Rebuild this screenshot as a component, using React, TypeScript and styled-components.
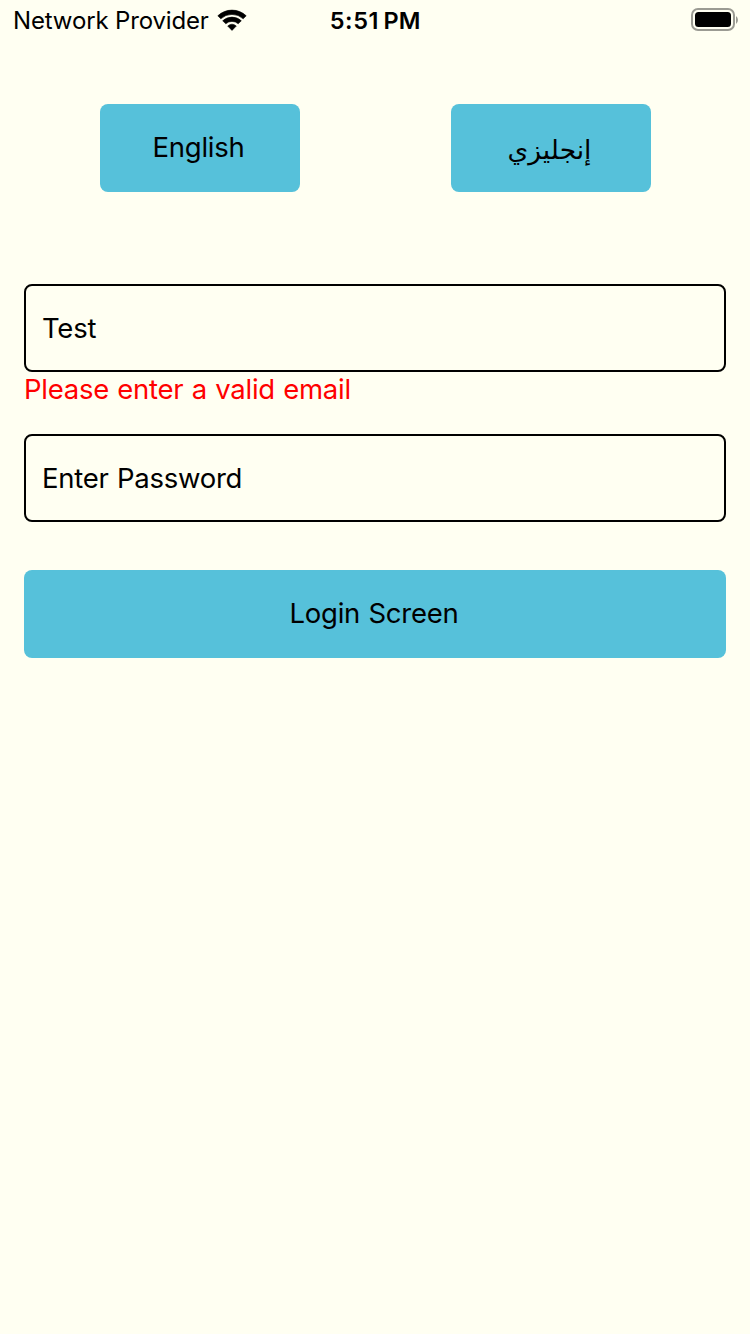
import React from "react";
import styled, { createGlobalStyle } from "styled-components";

const Global = createGlobalStyle`
  * { box-sizing: border-box; }
  body { margin: 0; background: #fffff2; }
`;
const Screen = styled.main`
  width: 750px; height: 1334px; background: #fffff2; color: #000;
  font-family: Inter, "DejaVu Sans", sans-serif; font-size: 27.5px; font-weight: 370;
  letter-spacing: -0.25px; word-spacing: 0.8px;
  display: flex; flex-direction: column; overflow: hidden;
`;
const StatusBar = styled.header`
  height: 40px; padding: 0 11px 0 13px; display: grid;
  grid-template-columns: 1fr auto 1fr; grid-template-rows: 40px; align-items: center;
`;
const Carrier = styled.div`
  display: flex; align-items: center; gap: 8px; font-size: 24px; letter-spacing: -0.15px; word-spacing: 0; white-space: nowrap;
`;
const CarrierName = styled.span`padding-top: 2px; line-height: 38px;`;
const Clock = styled.time`
  display: flex; gap: 5px; padding: 2px 2px 0 0; font-size: 23.5px; font-weight: 580; line-height: 38px; letter-spacing: 0;
`;
const Digits = styled.span`letter-spacing: 0.6px; margin-right: -0.6px;`;
const Battery = styled.svg`justify-self: end; display: block;`;
const Languages = styled.nav`
  display: flex; justify-content: space-around; padding: 0 24px; margin-top: 64px;
`;
const Button = styled.button<{ $wide?: boolean }>`
  width: ${(p) => (p.$wide ? "100%" : "200px")}; height: 88px; padding: 0 2px 2px 0;
  border: 0; border-radius: 8px; background: #56c1da; color: #000; font: inherit; letter-spacing: inherit; word-spacing: inherit;
`;
const ArabicLabel = styled.span`display: block; padding-top: 3px; font-size: 26.5px; letter-spacing: 0;`;
const Form = styled.form`padding: 0 24px; margin-top: 92px; display: flex; flex-direction: column;`;
const Input = styled.input`
  width: 100%; height: 88px; border: 2px solid #000; border-radius: 8px; padding: 0 16px;
  background: transparent; color: #000; font: inherit; letter-spacing: inherit; word-spacing: inherit; outline: none;
  &::placeholder { color: #000; opacity: 1; }
`;
const ErrorText = styled.p`margin: 0; height: 62px; line-height: 34px; color: #f00;`;
const Actions = styled.div`margin-top: 48px;`;

export default function App() {
  return (
    <Screen>
      <Global />
      <StatusBar>
        <Carrier>
          <CarrierName>Network Provider</CarrierName>
          <svg width="30" height="22" viewBox="0 0 30 22">
            <path d="M0.8 6.8A20.6 20.6 0 0 1 29.2 6.8L26.2 9.8A16.4 16.4 0 0 0 3.8 9.8Z" stroke="#000" strokeWidth="0.6" strokeLinejoin="round" />
            <path d="M5.7 11.8A13.6 13.6 0 0 1 24.3 11.8L21.2 14.8A9.2 9.2 0 0 0 8.8 14.8Z" stroke="#000" strokeWidth="0.6" strokeLinejoin="round" />
            <path d="M10.7 17A6.7 6.7 0 0 1 19.3 17L15 21.4Z" stroke="#000" strokeWidth="0.6" strokeLinejoin="round" />
          </svg>
        </Carrier>
        <Clock><Digits>5:51</Digits><span>PM</span></Clock>
        <Battery width="48" height="24" viewBox="0 0 48 24">
          <rect x="1" y="1" width="42" height="21" rx="6" fill="none" stroke="#9b9b93" strokeWidth="2" />
          <rect x="4" y="4" width="36" height="15" rx="3.5" />
          <path d="M45 8q2 1.5 2 4t-2 4Z" fill="#9b9b93" />
        </Battery>
      </StatusBar>
      <Languages>
        <Button>English</Button>
        <Button lang="ar"><ArabicLabel>إنجليزي</ArabicLabel></Button>
      </Languages>
      <Form>
        <Input defaultValue="Test" />
        <ErrorText>Please enter a valid email</ErrorText>
        <Input type="password" placeholder="Enter Password" />
        <Actions><Button type="button" $wide>Login Screen</Button></Actions>
      </Form>
    </Screen>
  );
}
